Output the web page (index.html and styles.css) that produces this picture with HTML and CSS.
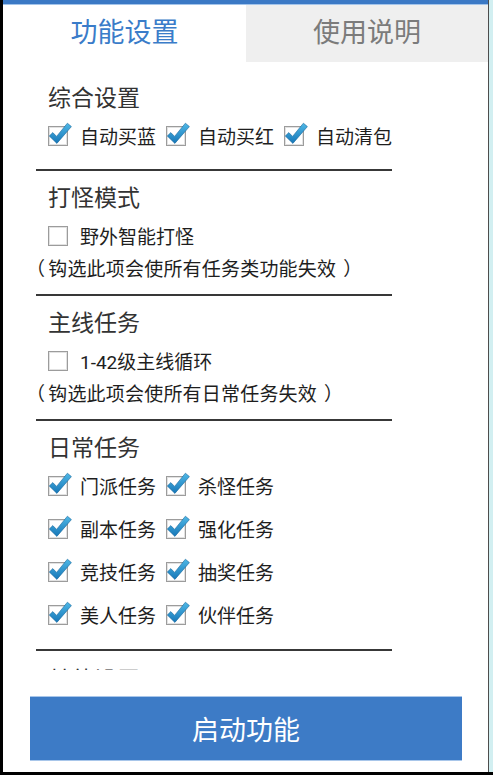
FILE: index.html
```html
<!DOCTYPE html>
<html lang="zh-CN">
<head>
<meta charset="utf-8">
<title>功能设置</title>
<link rel="stylesheet" href="styles.css">
</head>
<body>
<svg width="0" height="0" class="defs" aria-hidden="true">
  <defs>
    <linearGradient id="chk" x1="0" y1="0" x2="0" y2="1">
      <stop offset="0" stop-color="#4fb8e6"/>
      <stop offset="1" stop-color="#1677b8"/>
    </linearGradient>
  </defs>
</svg>
<div class="screen">
  <div class="app">
    <div class="topbar"></div>
    <div class="tabs">
      <div class="tab active">功能设置</div>
      <div class="tab">使用说明</div>
    </div>
    <div class="content">
      <section class="group">
        <div class="title">综合设置</div>
        <div class="row">
          <label class="item"><svg class="cb" viewBox="0 0 20 20"><rect class="box" x="0.5" y="0.5" width="19" height="19"/><rect class="inner" x="1.5" y="1.5" width="17" height="17"/><path class="tick" d="M1.3 10 L4.8 6.6 L8.6 10.4 L19.4 -2.8 L23.4 0.6 L8.9 17.4 Z"/></svg><span>自动买蓝</span></label>
          <label class="item"><svg class="cb" viewBox="0 0 20 20"><rect class="box" x="0.5" y="0.5" width="19" height="19"/><rect class="inner" x="1.5" y="1.5" width="17" height="17"/><path class="tick" d="M1.3 10 L4.8 6.6 L8.6 10.4 L19.4 -2.8 L23.4 0.6 L8.9 17.4 Z"/></svg><span>自动买红</span></label>
          <label class="item"><svg class="cb" viewBox="0 0 20 20"><rect class="box" x="0.5" y="0.5" width="19" height="19"/><rect class="inner" x="1.5" y="1.5" width="17" height="17"/><path class="tick" d="M1.3 10 L4.8 6.6 L8.6 10.4 L19.4 -2.8 L23.4 0.6 L8.9 17.4 Z"/></svg><span>自动清包</span></label>
        </div>
      </section>
      <section class="group with-note">
        <div class="title">打怪模式</div>
        <div class="row">
          <label class="item"><svg class="cb" viewBox="0 0 20 20"><rect class="box" x="0.5" y="0.5" width="19" height="19"/><rect class="inner" x="1.5" y="1.5" width="17" height="17"/></svg><span>野外智能打怪</span></label>
        </div>
        <div class="note"><span class="po">（</span>钩选此项会使所有任务类功能失效<span class="pc">）</span></div>
      </section>
      <section class="group with-note">
        <div class="title">主线任务</div>
        <div class="row">
          <label class="item"><svg class="cb" viewBox="0 0 20 20"><rect class="box" x="0.5" y="0.5" width="19" height="19"/><rect class="inner" x="1.5" y="1.5" width="17" height="17"/></svg><span>1-42级主线循环</span></label>
        </div>
        <div class="note"><span class="po">（</span>钩选此项会使所有日常任务失效<span class="pc">）</span></div>
      </section>
      <section class="group last">
        <div class="title">日常任务</div>
        <div class="row">
          <label class="item"><svg class="cb" viewBox="0 0 20 20"><rect class="box" x="0.5" y="0.5" width="19" height="19"/><rect class="inner" x="1.5" y="1.5" width="17" height="17"/><path class="tick" d="M1.3 10 L4.8 6.6 L8.6 10.4 L19.4 -2.8 L23.4 0.6 L8.9 17.4 Z"/></svg><span>门派任务</span></label>
          <label class="item"><svg class="cb" viewBox="0 0 20 20"><rect class="box" x="0.5" y="0.5" width="19" height="19"/><rect class="inner" x="1.5" y="1.5" width="17" height="17"/><path class="tick" d="M1.3 10 L4.8 6.6 L8.6 10.4 L19.4 -2.8 L23.4 0.6 L8.9 17.4 Z"/></svg><span>杀怪任务</span></label>
        </div>
        <div class="row">
          <label class="item"><svg class="cb" viewBox="0 0 20 20"><rect class="box" x="0.5" y="0.5" width="19" height="19"/><rect class="inner" x="1.5" y="1.5" width="17" height="17"/><path class="tick" d="M1.3 10 L4.8 6.6 L8.6 10.4 L19.4 -2.8 L23.4 0.6 L8.9 17.4 Z"/></svg><span>副本任务</span></label>
          <label class="item"><svg class="cb" viewBox="0 0 20 20"><rect class="box" x="0.5" y="0.5" width="19" height="19"/><rect class="inner" x="1.5" y="1.5" width="17" height="17"/><path class="tick" d="M1.3 10 L4.8 6.6 L8.6 10.4 L19.4 -2.8 L23.4 0.6 L8.9 17.4 Z"/></svg><span>强化任务</span></label>
        </div>
        <div class="row">
          <label class="item"><svg class="cb" viewBox="0 0 20 20"><rect class="box" x="0.5" y="0.5" width="19" height="19"/><rect class="inner" x="1.5" y="1.5" width="17" height="17"/><path class="tick" d="M1.3 10 L4.8 6.6 L8.6 10.4 L19.4 -2.8 L23.4 0.6 L8.9 17.4 Z"/></svg><span>竞技任务</span></label>
          <label class="item"><svg class="cb" viewBox="0 0 20 20"><rect class="box" x="0.5" y="0.5" width="19" height="19"/><rect class="inner" x="1.5" y="1.5" width="17" height="17"/><path class="tick" d="M1.3 10 L4.8 6.6 L8.6 10.4 L19.4 -2.8 L23.4 0.6 L8.9 17.4 Z"/></svg><span>抽奖任务</span></label>
        </div>
        <div class="row">
          <label class="item"><svg class="cb" viewBox="0 0 20 20"><rect class="box" x="0.5" y="0.5" width="19" height="19"/><rect class="inner" x="1.5" y="1.5" width="17" height="17"/><path class="tick" d="M1.3 10 L4.8 6.6 L8.6 10.4 L19.4 -2.8 L23.4 0.6 L8.9 17.4 Z"/></svg><span>美人任务</span></label>
          <label class="item"><svg class="cb" viewBox="0 0 20 20"><rect class="box" x="0.5" y="0.5" width="19" height="19"/><rect class="inner" x="1.5" y="1.5" width="17" height="17"/><path class="tick" d="M1.3 10 L4.8 6.6 L8.6 10.4 L19.4 -2.8 L23.4 0.6 L8.9 17.4 Z"/></svg><span>伙伴任务</span></label>
        </div>
      </section>
      <section class="group tail">
        <div class="title">其他设置</div>
      </section>
    </div>
    <div class="footer">
      <button class="start" type="button">启动功能</button>
    </div>
  </div>
</div>
</body>
</html>
```
FILE: styles.css
```css
html, body {
  margin: 0;
  padding: 0;
}
body {
  width: 493px;
  height: 775px;
  overflow: hidden;
  background: #d2eff1;
  font-family: "Roboto", "Noto Sans CJK SC", sans-serif;
}
.defs {
  position: absolute;
  width: 0;
  height: 0;
}
.screen {
  height: 772px;
  border-bottom: 3px solid #000;
}
.app {
  width: 485px;
  height: 772px;
  border-left: 3px solid #000;
  border-right: 1px solid #4d4d4d;
  background: #fff;
  display: flex;
  flex-direction: column;
}
.topbar {
  height: 4px;
  background: #3b79c5;
  border-bottom: 1px solid #a3c4ea;
  flex: none;
}
.tabs {
  display: flex;
  height: 57px;
  flex: none;
}
.tab {
  flex: 1;
  text-align: center;
  line-height: 57px;
  font-size: 27px;
  color: #7b7b7b;
  background: #efefef;
}
.tab.active {
  flex: none;
  width: 243px;
  color: #3a7cc9;
  background: #fff;
}
.content {
  height: 599px;
  padding-top: 9px;
  overflow: hidden;
  flex: none;
}
.group {
  margin-left: 33px;
  width: 344px;
  padding: 12px 0 12px 12px;
  border-bottom: 2px solid #383838;
}
.group.with-note {
  padding-bottom: 11px;
}
.group.last {
  padding-bottom: 13px;
}
.group.tail {
  padding-top: 14px;
  border-bottom: none;
}
.title {
  font-size: 23px;
  line-height: 31px;
  height: 31px;
  color: #333;
}
.row {
  height: 43px;
  display: flex;
  align-items: center;
  gap: 10px;
}
.item {
  display: flex;
  align-items: center;
  font-size: 19px;
  color: #1e1e1e;
}
.cb {
  width: 20px;
  height: 20px;
  margin-right: 12px;
  overflow: visible;
  flex: none;
}
.cb .box {
  fill: #fff;
  stroke: #9c9c9c;
  stroke-width: 1;
}
.cb .inner {
  fill: none;
  stroke: #e2e2e2;
  stroke-width: 1;
}
.cb .tick {
  fill: url(#chk);
  stroke: #14649a;
  stroke-width: 0.6;
  stroke-linejoin: round;
}
.note {
  margin-left: -22px;
  font-size: 19px;
  line-height: 26px;
  height: 26px;
  color: #1e1e1e;
  white-space: nowrap;
  letter-spacing: 0.2px;
}
.note .po {
  margin-right: 3px;
}
.note .pc {
  margin-left: 7px;
}
.footer {
  flex: 1;
  padding-top: 26px;
}
.start {
  display: block;
  margin: 0 0 0 27px;
  width: 432px;
  height: 65px;
  padding: 0;
  background: #3d7bc6;
  border: none;
  border-top: 1px solid #a8c6ea;
  border-bottom: 1px solid #a8c6ea;
  color: #fff;
  font-family: "Roboto", "Noto Sans CJK SC", sans-serif;
  font-size: 27px;
}
```
